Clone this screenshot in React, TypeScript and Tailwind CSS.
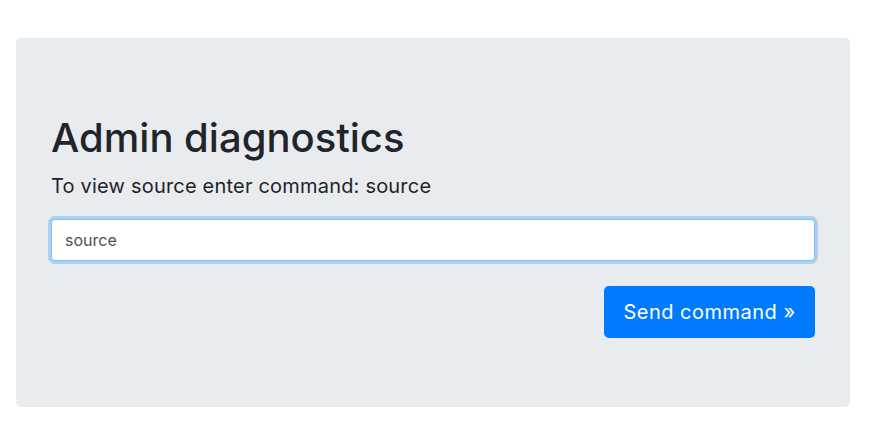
export default function App() {
  return (
    <div className="min-h-[444px] bg-white pt-[38px] px-4" style={{ fontFamily: "Inter, 'Liberation Sans', sans-serif" }}>
      {/* Jumbotron */}
      <div className="w-[834px] h-[369px] rounded-[5px] bg-[#e9ecef] px-[35px] pt-[76px]">
        <h1 className="text-[40px] leading-[48px] font-medium text-[#212529]">Admin diagnostics</h1>
        <p className="mt-[9px] text-[20px] leading-[30px] tracking-[0.2px] text-[#212529]">To view source enter command: source</p>
        <input
          defaultValue="source"
          className="mt-[18px] block w-full h-[42px] rounded-[4px] border border-[#80bdff] bg-white px-[13px] text-[16px] text-[#495057] outline-none shadow-[0_0_0_3px_rgba(0,123,255,0.25)]"
        />
        <div className="flex justify-end mt-[25px]">
          <button className="h-[52px] w-[211px] rounded-[5px] bg-[#007bff] text-[20px] tracking-[0.5px] text-white">Send command »</button>
        </div>
      </div>
    </div>
  );
}
